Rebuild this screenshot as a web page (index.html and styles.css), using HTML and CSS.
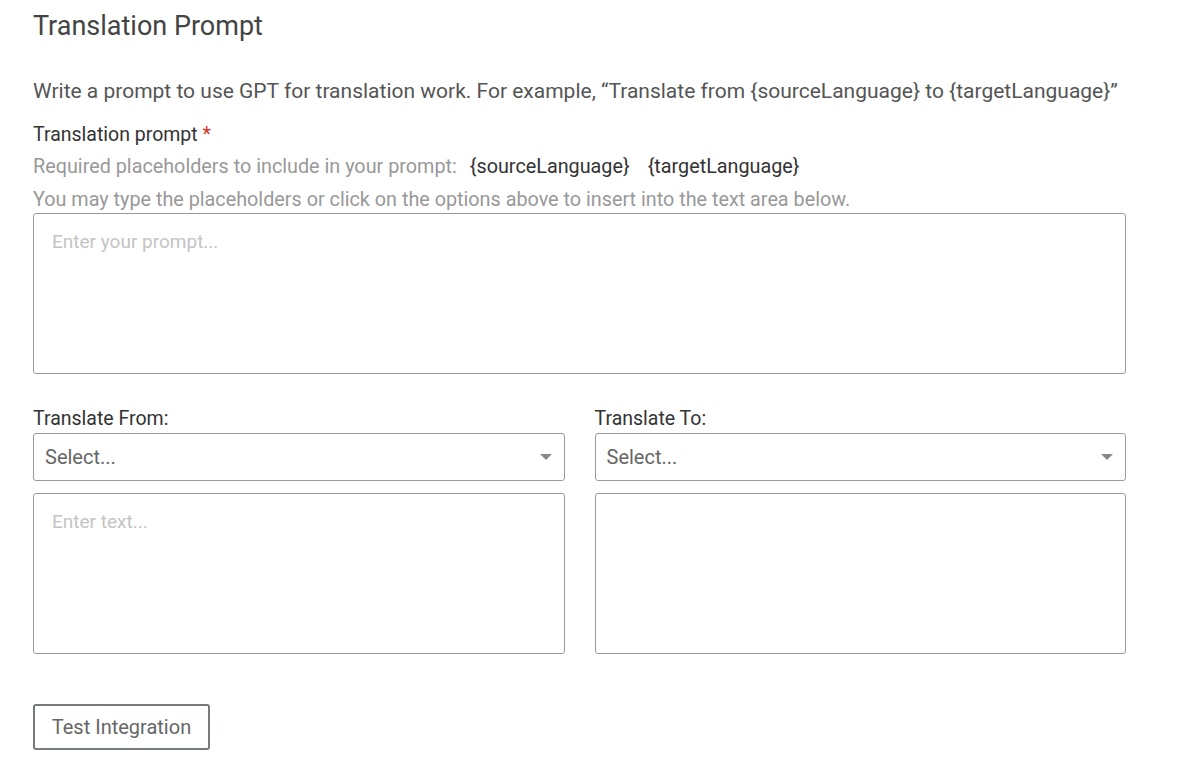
FILE: index.html
```html
<!DOCTYPE html>
<html lang="en">
  <head>
    <meta charset="UTF-8" />
    <title>Translation Prompt</title>
    <link rel="stylesheet" href="styles.css">
  </head>
  <body>
    <div class="panel">
      <h1 class="title">Translation Prompt</h1>
      <p class="intro">Write a prompt to use GPT for translation work. For example, “Translate from {sourceLanguage} to {targetLanguage}”</p>

      <label class="label">Translation prompt <span class="req">*</span></label>
      <p class="hint">Required placeholders to include in your prompt:<span class="token">{sourceLanguage}</span><span class="token">{targetLanguage}</span></p>
      <p class="hint">You may type the placeholders or click on the options above to insert into the text area below.</p>
      <textarea class="box prompt" placeholder="Enter your prompt..."></textarea>

      <div class="pair">
        <div class="col">
          <label class="label">Translate From:</label>
          <div class="select">
            <span>Select...</span>
            <span class="caret"></span>
          </div>
          <textarea class="box text" placeholder="Enter text..."></textarea>
        </div>
        <div class="col">
          <label class="label">Translate To:</label>
          <div class="select">
            <span>Select...</span>
            <span class="caret"></span>
          </div>
          <textarea class="box text"></textarea>
        </div>
      </div>

      <button class="btn">Test Integration</button>
    </div>
  </body>
</html>
```

FILE: styles.css
```css
* {
  margin: 0;
  padding: 0;
  box-sizing: border-box;
}
body {
  background: #fff;
  color: #333;
  font-family: Roboto, "Liberation Sans", sans-serif;
}
.panel {
  width: 1126px;
  padding: 10px 0 0 33px;
}
.title {
  font-size: 27px;
  font-weight: 400;
  color: #444;
  line-height: 32px;
}
.intro {
  margin-top: 35px;
  font-size: 21px;
  line-height: 28px;
  color: #555;
}
.label {
  display: block;
  margin-top: 18px;
  font-size: 19.5px;
  line-height: 24px;
  color: #333;
}
.req {
  color: #d0342c;
}
.hint {
  margin-top: 7px;
  font-size: 19.8px;
  line-height: 26px;
  color: #999;
}
.hint + .hint {
  margin-top: 7px;
}
.token {
  color: #333;
  margin-left: 13px;
}
.token + .token {
  margin-left: 18px;
}
.box {
  display: block;
  width: 100%;
  border: 1px solid #999;
  border-radius: 3px;
  padding: 16px 18px;
  font-family: inherit;
  font-size: 19px;
  color: #333;
  resize: none;
  outline: none;
}
.box::placeholder {
  color: #c4c4c4;
}
.prompt {
  height: 161px;
}
.pair {
  display: grid;
  grid-template-columns: 1fr 1fr;
  gap: 30px;
  margin-top: 22px;
}
.pair .label {
  margin-top: 11px;
  margin-bottom: 2px;
}
.select {
  display: flex;
  align-items: center;
  justify-content: space-between;
  height: 48px;
  border: 1px solid #999;
  border-radius: 3px;
  padding: 0 12px 0 11px;
  font-size: 20px;
  color: #666;
}
.caret {
  width: 0;
  height: 0;
  border-left: 6px solid transparent;
  border-right: 6px solid transparent;
  border-top: 6px solid #888;
}
.text {
  height: 161px;
  margin-top: 12px;
}
.btn {
  margin-top: 50px;
  width: 177px;
  height: 46px;
  background: #fff;
  border: 2px solid #757b7d;
  border-radius: 3px;
  font-family: inherit;
  font-size: 20px;
  color: #666;
}
```
